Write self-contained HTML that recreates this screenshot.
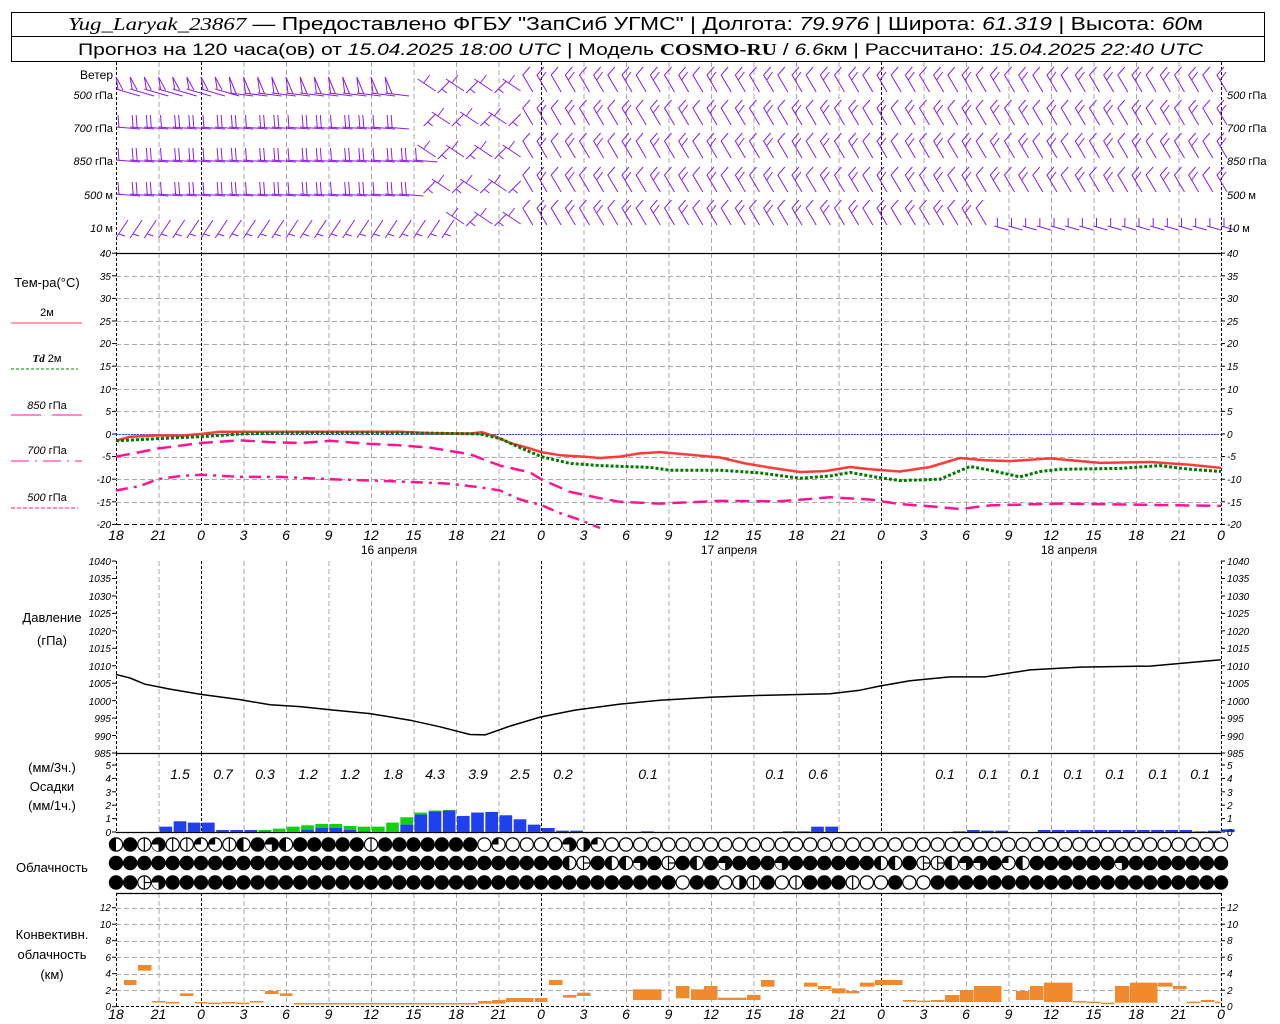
<!DOCTYPE html>
<html><head><meta charset="utf-8"><style>
html,body{margin:0;padding:0;background:#fff;}
svg{display:block;}
text{font-family:"Liberation Sans",sans-serif;fill:#000;}
.t{font-size:10px;font-style:italic;}
.tr{font-size:10px;font-style:italic;}
.ax{font-size:14px;font-style:italic;text-anchor:middle;}
.lb{font-size:12px;text-anchor:middle;}
.wl{font-size:11px;}
.pn{font-size:14px;font-style:italic;text-anchor:middle;}
</style></head><body>
<svg id="s" width="1280" height="1024" viewBox="0 0 1280 1024" xmlns="http://www.w3.org/2000/svg">
<rect x="0" y="0" width="1280" height="1024" fill="#fff"/>
<g id="grid"></g>
<g id="gfx"></g>
<!-- header -->
<rect x="11.5" y="12.5" width="1253" height="49" fill="none" stroke="#000"/>
<line x1="11" y1="36.5" x2="1265" y2="36.5" stroke="#000"/>
<text x="68" y="30" font-size="18" textLength="1135" lengthAdjust="spacingAndGlyphs"><tspan font-family="Liberation Serif" font-style="italic">Yug_Laryak_23867</tspan> — Предоставлено ФГБУ "ЗапСиб УГМС" | Долгота: <tspan font-style="italic">79.976</tspan> | Широта: <tspan font-style="italic">61.319</tspan> | Высота: <tspan font-style="italic">60</tspan>м</text>
<text x="78" y="55" font-size="17" textLength="1125" lengthAdjust="spacingAndGlyphs">Прогноз на 120 часа(ов) от <tspan font-style="italic">15.04.2025 18:00 UTC</tspan>  | Модель <tspan font-family="Liberation Serif" font-weight="bold">COSMO-RU</tspan> / <tspan font-style="italic">6.6</tspan>км | Рассчитано: <tspan font-style="italic">15.04.2025 22:40 UTC</tspan></text>

<!-- wind labels -->
<g class="wl">
<text x="113" y="79" text-anchor="end" font-size="12">Ветер</text>
<text x="113" y="99" text-anchor="end"><tspan font-style="italic">500</tspan> гПа</text>
<text x="113" y="132" text-anchor="end"><tspan font-style="italic">700</tspan> гПа</text>
<text x="113" y="165" text-anchor="end"><tspan font-style="italic">850</tspan> гПа</text>
<text x="113" y="199" text-anchor="end"><tspan font-style="italic">500</tspan>  м</text>
<text x="113" y="232" text-anchor="end"><tspan font-style="italic">10</tspan>   м</text>
<text x="1227" y="99"><tspan font-style="italic">500</tspan> гПа</text>
<text x="1227" y="132"><tspan font-style="italic">700</tspan> гПа</text>
<text x="1227" y="165"><tspan font-style="italic">850</tspan> гПа</text>
<text x="1227" y="199"><tspan font-style="italic">500</tspan>  м</text>
<text x="1227" y="232"><tspan font-style="italic">10</tspan>   м</text>
</g>

<!-- temp legend -->
<g class="lb">
<text x="47" y="287" font-size="13">Тем-ра(°C)</text>
<text x="47" y="316" font-size="11">2м</text>
<text x="47" y="362" font-size="11"><tspan font-style="italic" font-weight="bold" font-family="Liberation Serif">Td</tspan>  2м</text>
<text x="47" y="409" font-size="11"><tspan font-style="italic">850</tspan> гПа</text>
<text x="47" y="454" font-size="11"><tspan font-style="italic">700</tspan> гПа</text>
<text x="47" y="501" font-size="11"><tspan font-style="italic">500</tspan> гПа</text>
<text x="52" y="622" font-size="13">Давление</text>
<text x="52" y="645" font-size="13">(гПа)</text>
<text x="52" y="772" font-size="13">(мм/3ч.)</text>
<text x="52" y="791" font-size="13">Осадки</text>
<text x="52" y="810" font-size="13">(мм/1ч.)</text>
<text x="52" y="872" font-size="13">Облачность</text>
<text x="52" y="939" font-size="13">Конвективн.</text>
<text x="52" y="959" font-size="13">облачность</text>
<text x="52" y="979" font-size="13">(км)</text>
</g>
<line x1="11" y1="323" x2="82" y2="323" stroke="#ff4040" stroke-width="1"/>
<line x1="11" y1="369" x2="78" y2="369" stroke="#008000" stroke-dasharray="3,2"/>
<line x1="11" y1="415" x2="41" y2="415" stroke="#ff1493"/><line x1="52" y1="415" x2="82" y2="415" stroke="#ff1493"/>
<line x1="11" y1="461" x2="82" y2="461" stroke="#ff1493" stroke-dasharray="18,6,2,6"/>
<line x1="11" y1="508" x2="78" y2="508" stroke="#ff1493" stroke-dasharray="4,2"/>

<!-- temp ticks -->
<g class="t" text-anchor="end">
<text x="111" y="257">40</text><text x="111" y="280">35</text><text x="111" y="302">30</text><text x="111" y="325">25</text><text x="111" y="347">20</text><text x="111" y="370">15</text><text x="111" y="393">10</text><text x="111" y="415">5</text><text x="111" y="438">0</text><text x="111" y="460">-5</text><text x="111" y="483">-10</text><text x="111" y="506">-15</text><text x="111" y="528">-20</text>
<text x="111" y="565">1040</text><text x="111" y="582">1035</text><text x="111" y="600">1030</text><text x="111" y="617">1025</text><text x="111" y="635">1020</text><text x="111" y="652">1015</text><text x="111" y="670">1010</text><text x="111" y="687">1005</text><text x="111" y="705">1000</text><text x="111" y="722">995</text><text x="111" y="740">990</text><text x="111" y="757">985</text>
<text x="111" y="769">5</text><text x="111" y="782">4</text><text x="111" y="796">3</text><text x="111" y="809">2</text><text x="111" y="822">1</text><text x="111" y="836">0</text>
<text x="111" y="911">12</text><text x="111" y="928">10</text><text x="111" y="944">8</text><text x="111" y="961">6</text><text x="111" y="977">4</text><text x="111" y="994">2</text><text x="111" y="1010">0</text>
</g>
<g class="tr">
<text x="1227" y="257">40</text><text x="1227" y="280">35</text><text x="1227" y="302">30</text><text x="1227" y="325">25</text><text x="1227" y="347">20</text><text x="1227" y="370">15</text><text x="1227" y="393">10</text><text x="1227" y="415">5</text><text x="1227" y="438">0</text><text x="1227" y="460">-5</text><text x="1227" y="483">-10</text><text x="1227" y="506">-15</text><text x="1227" y="528">-20</text>
<text x="1227" y="565">1040</text><text x="1227" y="582">1035</text><text x="1227" y="600">1030</text><text x="1227" y="617">1025</text><text x="1227" y="635">1020</text><text x="1227" y="652">1015</text><text x="1227" y="670">1010</text><text x="1227" y="687">1005</text><text x="1227" y="705">1000</text><text x="1227" y="722">995</text><text x="1227" y="740">990</text><text x="1227" y="757">985</text>
<text x="1227" y="769">5</text><text x="1227" y="782">4</text><text x="1227" y="796">3</text><text x="1227" y="809">2</text><text x="1227" y="822">1</text><text x="1227" y="836">0</text>
<text x="1227" y="911">12</text><text x="1227" y="928">10</text><text x="1227" y="944">8</text><text x="1227" y="961">6</text><text x="1227" y="977">4</text><text x="1227" y="994">2</text><text x="1227" y="1010">0</text>
</g>

<!-- x axis labels -->
<g class="ax">
<text x="116" y="540">18</text><text x="158.5" y="540">21</text><text x="201" y="540">0</text><text x="243.5" y="540">3</text><text x="286" y="540">6</text><text x="328.5" y="540">9</text><text x="371" y="540">12</text><text x="413.5" y="540">15</text><text x="456" y="540">18</text><text x="498.5" y="540">21</text><text x="541" y="540">0</text><text x="583.5" y="540">3</text><text x="626" y="540">6</text><text x="668.5" y="540">9</text><text x="711" y="540">12</text><text x="753.5" y="540">15</text><text x="796" y="540">18</text><text x="838.5" y="540">21</text><text x="881" y="540">0</text><text x="923.5" y="540">3</text><text x="966" y="540">6</text><text x="1008.5" y="540">9</text><text x="1051" y="540">12</text><text x="1093.5" y="540">15</text><text x="1136" y="540">18</text><text x="1178.5" y="540">21</text><text x="1221" y="540">0</text>
<text x="116" y="1019">18</text><text x="158.5" y="1019">21</text><text x="201" y="1019">0</text><text x="243.5" y="1019">3</text><text x="286" y="1019">6</text><text x="328.5" y="1019">9</text><text x="371" y="1019">12</text><text x="413.5" y="1019">15</text><text x="456" y="1019">18</text><text x="498.5" y="1019">21</text><text x="541" y="1019">0</text><text x="583.5" y="1019">3</text><text x="626" y="1019">6</text><text x="668.5" y="1019">9</text><text x="711" y="1019">12</text><text x="753.5" y="1019">15</text><text x="796" y="1019">18</text><text x="838.5" y="1019">21</text><text x="881" y="1019">0</text><text x="923.5" y="1019">3</text><text x="966" y="1019">6</text><text x="1008.5" y="1019">9</text><text x="1051" y="1019">12</text><text x="1093.5" y="1019">15</text><text x="1136" y="1019">18</text><text x="1178.5" y="1019">21</text><text x="1221" y="1019">0</text>
</g>
<g class="lb" font-size="13">
<text x="389" y="554">16  апреля</text><text x="729" y="554">17  апреля</text><text x="1069" y="554">18  апреля</text>
</g>
<!-- precip numbers -->
<g class="pn">
<text x="180" y="779">1.5</text><text x="223" y="779">0.7</text><text x="265" y="779">0.3</text><text x="308" y="779">1.2</text><text x="350" y="779">1.2</text><text x="393" y="779">1.8</text><text x="435" y="779">4.3</text><text x="478" y="779">3.9</text><text x="520" y="779">2.5</text><text x="563" y="779">0.2</text><text x="648" y="779">0.1</text><text x="775" y="779">0.1</text><text x="818" y="779">0.6</text><text x="945" y="779">0.1</text><text x="988" y="779">0.1</text><text x="1030" y="779">0.1</text><text x="1073" y="779">0.1</text><text x="1115" y="779">0.1</text><text x="1158" y="779">0.1</text><text x="1200" y="779">0.1</text>
</g>
</svg>
<script>
(function(){
var NS="http://www.w3.org/2000/svg";
var grid=document.getElementById('grid'),g=document.getElementById('gfx');
function el(p,tag,a){var e=document.createElementNS(NS,tag);for(var k in a)e.setAttribute(k,a[k]);p.appendChild(e);return e;}
function ln(p,x1,y1,x2,y2,st,w,da){var a={x1:x1,y1:y1,x2:x2,y2:y2,stroke:st,'stroke-width':w||1};if(da)a['stroke-dasharray']=da;return el(p,'line',a);}
var X0=116,DX=42.5,HX=DX/3;
var panels=[[62,253],[253,524],[561,753],[753,832],[893,1006]];
for(var k=0;k<=26;k++){var x=X0+k*DX+0.5;var day=(k%8==2)||k==0||k==26;
 panels.forEach(function(p){ln(grid,x,p[0],x,p[1],day?'#000':'#a8a8a8',1,day?'3,2':'5,3');});}
for(var t=35;t>=-20;t-=5){var y=Math.round(434-4.52*t)+0.5;ln(grid,116,y,1221,y,t==-20?'#000':'#a8a8a8',1,'5,3');}
for(var c=2;c<=12;c+=2){var y=Math.round(1006.7-8.25*c)+0.5;ln(grid,116,y,1221,y,'#a8a8a8',1,'5,3');}
[253.5,753.5,832.5,893.5].forEach(function(y){ln(grid,116,y,1221,y,'#000',1.2);});
ln(grid,116,1006.5,1221,1006.5,'#000',1,'3,2');
ln(grid,116,434.5,1221,434.5,'#3050ff',1,'2,1');
function ticks(ys){ys.forEach(function(y){ln(grid,112,y,116,y,'#000');ln(grid,1221,y,1225,y,'#000');});}
var ty=[];for(var t=40;t>=-20;t-=5)ty.push(434-4.52*t);ticks(ty);
var py=[];for(var p=1040;p>=985;p-=5)py.push(753-(p-985)*3.49);ticks(py);
ticks([765,778.4,791.8,805.2,818.6,832]);
ticks([907.7,924.2,940.7,957.2,973.7,990.2,1006.7]);
function curve(pts,f,st,w,da){var d='';pts.forEach(function(p,i){d+=(i?'L':'M')+p[0]+','+f(p[1]).toFixed(1);});var a={d:d,fill:'none',stroke:st,'stroke-width':w,'stroke-linejoin':'round'};if(da)a['stroke-dasharray']=da;el(g,'path',a);}
var T=function(v){return 434-4.52*v;};
curve([[116,-1.5],[130,-0.6],[158,-0.3],[180,-0.4],[201,0],[220,0.5],[300,0.5],[400,0.5],[430,0.2],[470,0.1],[482,0.4],[495,-0.5],[510,-2],[530,-3.2],[541,-4],[560,-4.7],[583,-5],[600,-5.3],[620,-5],[640,-4.3],[660,-4],[690,-4.6],[720,-5.2],[745,-6.5],[775,-7.6],[800,-8.4],[825,-8.2],[850,-7.3],[870,-7.8],[900,-8.3],[930,-7.3],[960,-5.3],[985,-5.8],[1010,-6],[1050,-5.4],[1100,-6.4],[1150,-6.2],[1190,-6.8],[1221,-7.5]],T,'#ff3b3b',2.5);
curve([[116,-1.5],[160,-1],[201,-0.6],[240,0],[300,0.3],[430,0.2],[480,0],[500,-1],[520,-3],[541,-5],[570,-6.5],[600,-7],[650,-7.4],[670,-8],[720,-8],[760,-8.6],[800,-9.8],[830,-9.3],[850,-8.5],[875,-9.5],[900,-10.3],[940,-10],[970,-7.2],[990,-8],[1020,-9.5],[1040,-8.3],[1060,-7.8],[1120,-7.6],[1160,-7],[1190,-7.8],[1221,-8.3]],T,'#007a00',3,'3,2');
curve([[116,-5],[140,-4],[158,-3.2],[201,-2],[240,-1.4],[270,-1.8],[300,-2],[330,-1.5],[370,-2.2],[400,-2.5],[430,-3],[470,-4.5],[500,-7],[530,-8.5],[541,-10],[570,-12.8],[600,-14.2],[620,-15],[660,-15.4],[720,-14.8],[780,-14.9],[830,-14],[870,-14.5],[900,-15.5],[930,-16],[960,-16.6],[990,-15.8],[1060,-15.4],[1221,-15.9]],T,'#ff1493',2.5,'14,7');
curve([[116,-12.5],[140,-11.5],[158,-10],[180,-9.3],[201,-9],[240,-9.5],[280,-9.5],[330,-10],[400,-10.5],[450,-11],[480,-11.8],[500,-12.5],[520,-14.5],[541,-15.7],[560,-17.5],[580,-19],[600,-20.8]],T,'#ff1493',2.5,'12,6,3,6');
curve([[116,1007.5],[130,1006.5],[145,1004.7],[170,1003.3],[201,1001.8],[240,1000.3],[270,998.8],[300,998.3],[330,997.4],[370,996.3],[410,994.4],[440,992.5],[470,990.3],[485,990.2],[510,992.7],[540,995.3],[575,997.3],[620,999],[660,1000.1],[710,1001],[760,1001.5],[830,1002],[860,1003],[880,1004.2],[910,1005.7],[950,1006.8],[985,1006.8],[1030,1008.8],[1080,1009.6],[1150,1009.9],[1221,1011.7]],function(p){return 753-(p-985)*3.49;},'#000',1.5);
var pr=[[3,.4,.4],[4,.8,.8],[5,.7,.7],[6,.7,.7],[7,.15,.15],[8,.15,.15],[9,.15,.15],[10,.05,.15],[11,0,.25],[12,0,.4],[13,.15,.5],[14,.3,.6],[15,.3,.6],[16,.15,.45],[17,.05,.4],[18,0,.4],[19,0,.7],[20,.55,1.1],[21,1.3,1.45],[22,1.55,1.6],[23,1.6,1.65],[24,1.2,1.2],[25,1.45,1.45],[26,1.5,1.5],[27,1.25,1.25],[28,.95,.95],[29,.55,.55],[30,.3,.3],[31,.1,.1],[32,.1,.1],[37,.05,.05],[47,.05,.05],[48,.05,.05],[49,.4,.4],[50,.4,.4],[59,.05,.05],[60,.15,.15],[61,.1,.1],[62,.1,.1]];
for(var i=65;i<=75;i++)pr.push([i,.15,.15]);pr.push([76,.05,.05],[77,.1,.1],[78,.2,.2]);
pr.forEach(function(b){var x=X0+b[0]*HX+1,w=HX-1.5;if(b[2]>b[1])el(g,'rect',{x:x,y:832-b[2]*13.4,width:w,height:(b[2]-b[1])*13.4,fill:'#10d010'});if(b[1]>0)el(g,'rect',{x:x,y:832-b[1]*13.4,width:w,height:b[1]*13.4,fill:'#2040f0'});});
var cv=[[124,137,720,735],[138,152,675,692],[152,166,783,787],[166,180,786,789],[180,194,760,768],[195,208,786,789],[208,222,788,791],[222,236,786,789],[236,250,788,791],[250,264,783,786],[265,279,753,762],[280,293,760,768],[294,478,789,792],[478,492,783,791],[492,506,780,791],[506,534,774,786],[535,548,774,786],[549,563,720,735],[563,577,765,773],[577,591,758,768],[633,662,748,780],[676,690,738,775],[691,705,748,780],[704,718,738,780],[718,747,773,780],[747,761,765,780],[761,775,720,740],[804,818,728,740],[818,832,738,748],[832,846,745,760],[846,860,753,760],[860,875,728,740],[875,903,720,735],[903,917,780,785],[917,931,782,786],[931,945,780,786],[945,960,765,786],[960,974,750,786],[974,1002,738,786],[1016,1030,753,780],[1030,1044,738,780],[1044,1073,728,786],[1073,1087,783,786],[1087,1101,785,789],[1101,1115,788,791],[1115,1130,738,788],[1130,1158,728,788],[1158,1173,728,740],[1173,1187,738,748],[1187,1201,785,788],[1201,1215,780,786],[1215,1221,785,788]];
cv.forEach(function(b){el(g,'rect',{x:b[0],y:740+b[2]/3,width:b[1]-b[0]-0.5,height:Math.max(1.5,(b[3]-b[2])/3),fill:'#f08a2c'});});
function rep(c,n){return new Array(n+1).join(c);}
var rows=[
 "LFVTVVQQVLFTLFFFFFVFFFFFFFEQEEEETRQ"+rep('E',44),
 rep('F',30)+"FFLXFLLTFXFLFTFFFTFFFFFFLLFX"+"XLTTFQL"+"FFFFFFTFFFFFFF",
 "FFXT"+rep('F',26)+"FFFFFFFFFFEFFERVFEVFFFVEEFEE"+rep('F',21)];
var ry=[844.5,863,882.5],r=6.6;
rows.forEach(function(s,ri){for(var i=0;i<s.length&&i<79;i++){var cx=X0+i*HX,cy=ry[ri],c=s[i];
 var full=(c=='F'||c=='T');
 el(g,'circle',{cx:cx,cy:cy,r:r,fill:full?'#000':'#fff',stroke:'#000','stroke-width':1.2});
 if(c=='L')el(g,'path',{d:'M'+cx+','+(cy-r)+'A'+r+','+r+' 0 0 0 '+cx+','+(cy+r)+'Z',fill:'#000'});
 if(c=='R')el(g,'path',{d:'M'+cx+','+(cy-r)+'A'+r+','+r+' 0 0 1 '+cx+','+(cy+r)+'Z',fill:'#000'});
 if(c=='T')el(g,'path',{d:'M'+cx+','+cy+'L'+(cx-r)+','+cy+'A'+r+','+r+' 0 0 0 '+cx+','+(cy+r)+'Z',fill:'#fff'});
 if(c=='Q')el(g,'path',{d:'M'+cx+','+cy+'L'+cx+','+(cy-r)+'A'+r+','+r+' 0 0 0 '+(cx-r)+','+cy+'Z',fill:'#000'});
 if(c=='V'||c=='X')ln(g,cx,cy-r,cx,cy+r,'#000',1.2);
 if(c=='X')ln(g,cx,cy,cx+r,cy,'#000',1.2);
}});
var W='#8a1ee6',wg=el(g,'g',{stroke:W,'stroke-width':1,fill:'none'});
function P(d){el(wg,'path',{d:d});}
var lv=[95,128,161,195,228],leftN=[20,20,22,21,0];
for(var L=0;L<5;L++){var y=lv[L];
 for(var i=0;i<79;i++){var x=X0+i*HX;
  if(L<4&&i<leftN[L]){
   var sl=(L==0)?(i<8?6:2):1;
   P('M'+x+','+(y-sl)+'L'+(x+24)+','+(y+1));
   if(L==0){if(i%1==0)P('M'+(x+2)+','+(y-sl)+'L'+(x)+','+(y-18)+'L'+(x+7)+','+(y-sl+1));}
   else{var nb=(i%3==0)?1:2;for(var b=0;b<nb;b++){P('M'+(x+3+b*4)+','+y+'L'+(x+2+b*4)+','+(y-13));}}
  } else if(L==4&&i<24){
   P('M'+x+','+(y+10)+'L'+(x+12)+','+(y-8));P('M'+(x+3)+','+(y+6)+'L'+(x+9)+','+(y+8));
  } else if(L==4&&i>=62){
   P('M'+x+','+(y-2)+'L'+(x+14)+','+(y+2));P('M'+(x+3)+','+(y-1)+'L'+(x+3)+','+(y-10));
  } else if(i>=22&&i<29){
   if((i+L)%2==0){P('M'+(x-10)+','+(y-16)+'L'+(x+8)+','+(y-4));P('M'+(x-4)+','+(y-12)+'L'+(x+2)+','+(y-20));}
   else{P('M'+(x-4)+','+(y-2)+'L'+(x+8)+','+(y-14));P('M'+(x)+','+(y-6)+'L'+(x+5)+','+(y-2));}
  } else if(i>=29){
   var top=y-28;
   P('M'+(x+6)+','+(y-3)+'L'+(x-4)+','+(top+8)+'L'+(x+3)+','+top);
   if(i%2==0)P('M'+(x-1)+','+(top+13)+'L'+(x+5)+','+(top+5));
  }
 }}
})();
</script>
</body></html>
